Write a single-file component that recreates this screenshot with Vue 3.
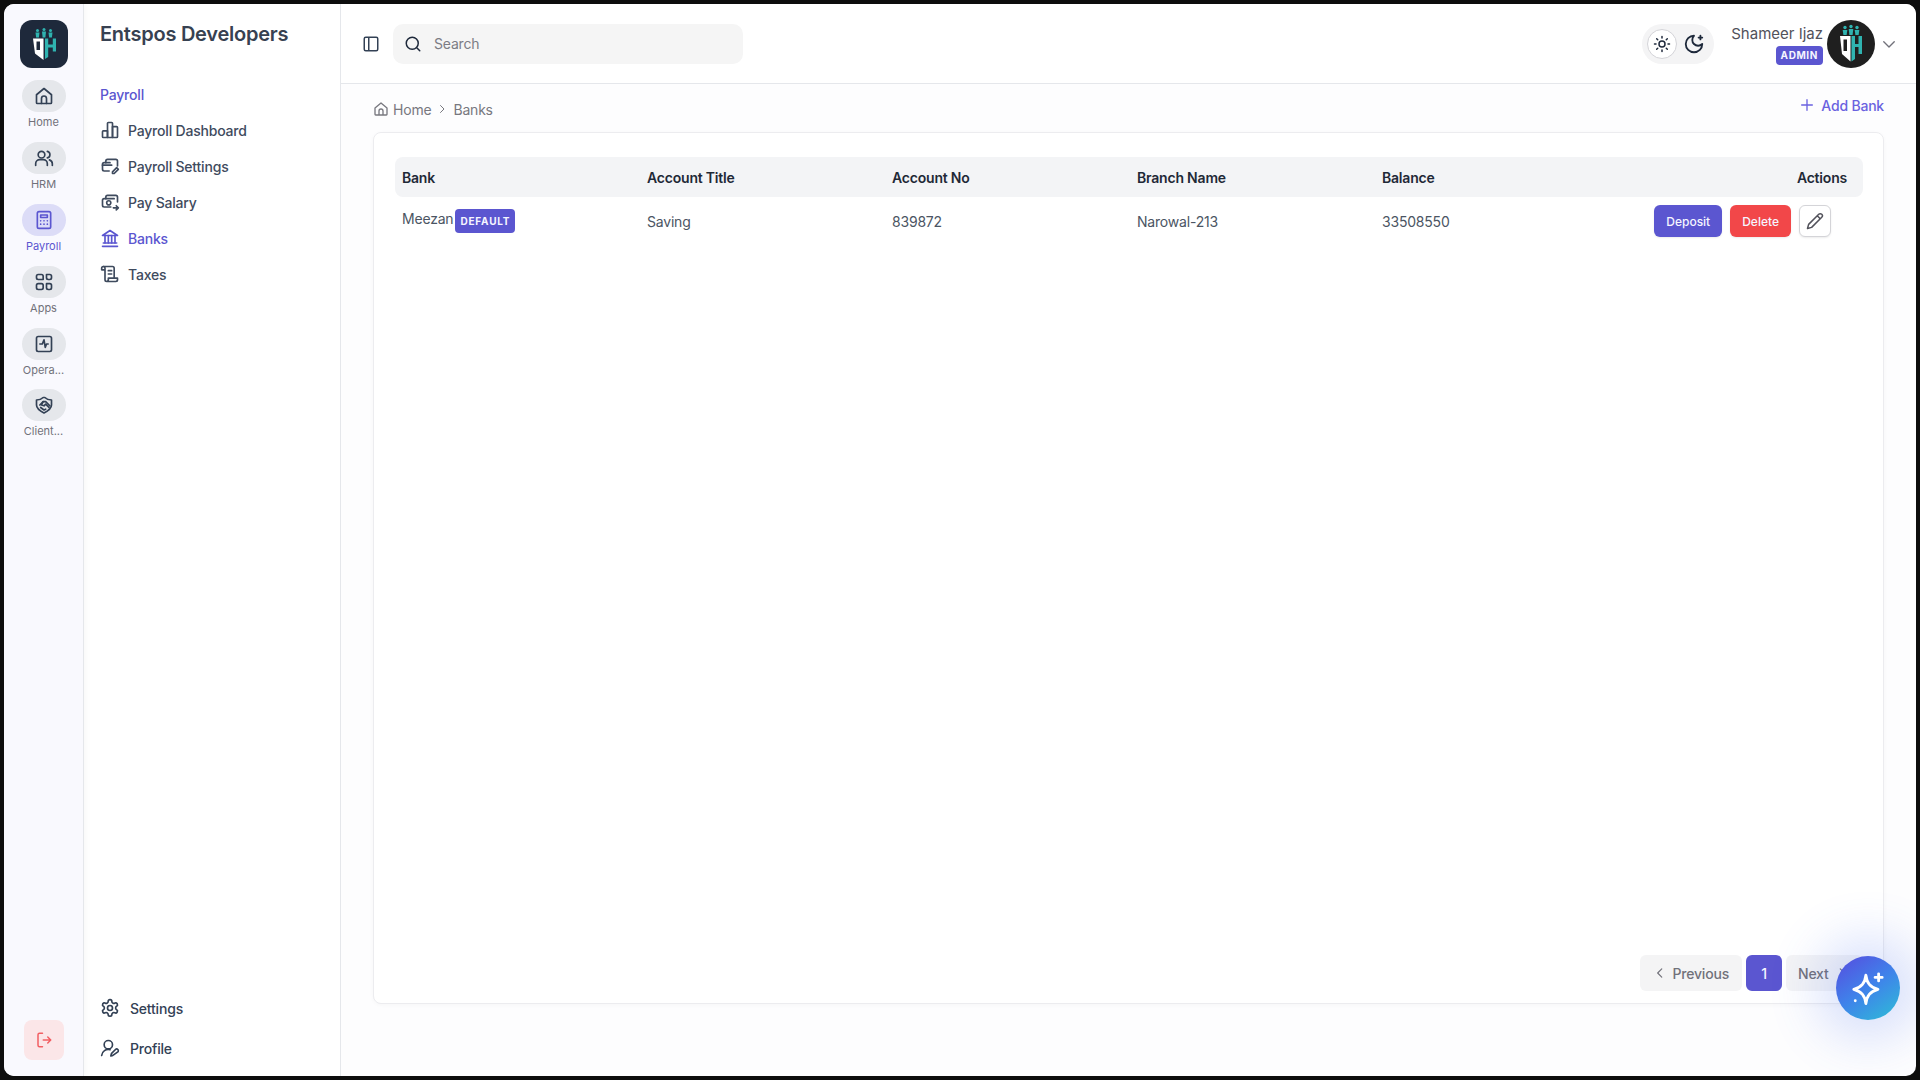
<template>
  <div class="app">
    <div class="frame">
      <!-- icon rail -->
      <aside class="rail">
        <div class="logo">
          <svg viewBox="0 0 48 48" width="48" height="48">
            <g fill="#2fb3b0">
              <circle cx="17.5" cy="10.5" r="1.5" /><path d="M15.5 12.5h4l-.6 5h-2.8z" />
              <circle cx="24" cy="9.5" r="1.5" /><path d="M22 11.5h4l-.6 6h-2.8z" />
              <circle cx="30.5" cy="10.5" r="1.5" /><path d="M28.5 12.5h4l-.6 5h-2.8z" />
              <path d="M25 18.500h3.200v6h4.600v-6H36v13h-3.200v-4h-4.600v9.500L25 39z" />
            </g>
            <path fill="#fff" fill-rule="evenodd" d="M13 18.500h10.500V40L15 33.500zM16.500 21.500v8.500h3.500v-8.500z" />
          </svg>
        </div>
        <a v-for="item in railItems" :key="item.label" class="rail-item" :class="{ active: item.active }">
          <span class="rail-pill">
            <svg class="icon" viewBox="0 0 24 24" width="20" height="20"><path v-for="d in item.icon" :key="d" :d="d" /></svg>
          </span>
          <span class="rail-label">{{ item.label }}</span>
        </a>
        <button class="logout">
          <svg class="icon" viewBox="0 0 24 24" width="18" height="18"><path d="M10 3H6a2 2 0 0 0-2 2v14a2 2 0 0 0 2 2h4M11 12h10M17 8l4 4-4 4" /></svg>
        </button>
      </aside>

      <!-- section sidebar -->
      <nav class="sidebar">
        <h1 class="company">Entspos Developers</h1>
        <p class="section">Payroll</p>
        <a v-for="link in sideLinks" :key="link.label" class="side-link" :class="{ active: link.active }">
          <svg class="icon" viewBox="0 0 24 24" width="20" height="20"><path v-for="d in link.icon" :key="d" :d="d" /></svg>
          <span>{{ link.label }}</span>
        </a>
        <div class="side-bottom">
          <a v-for="link in bottomLinks" :key="link.label" class="bottom-link">
            <svg class="icon" viewBox="0 0 24 24" width="20" height="20"><path v-for="d in link.icon" :key="d" :d="d" /></svg>
            <span>{{ link.label }}</span>
          </a>
        </div>
      </nav>

      <div class="main">
        <header class="topbar">
          <svg class="icon panel-icon" viewBox="0 0 24 24" width="18" height="18"><path d="M5 3h14a2 2 0 0 1 2 2v14a2 2 0 0 1-2 2H5a2 2 0 0 1-2-2V5a2 2 0 0 1 2-2zM9 3v18" /></svg>
          <div class="search">
            <svg class="icon" viewBox="0 0 24 24" width="18" height="18"><path d="M11 3a8 8 0 1 0 0 16 8 8 0 0 0 0-16zM21 21l-4.300-4.300" /></svg>
            <span>Search</span>
          </div>
          <div class="theme">
            <span class="sun">
              <svg class="icon" viewBox="0 0 24 24" width="18" height="18"><path d="M12 8a4 4 0 1 0 0 8 4 4 0 0 0 0-8zM12 2v2M12 20v2M4.900 4.900l1.400 1.400M17.700 17.700l1.400 1.400M2 12h2M20 12h2M6.300 17.700l-1.400 1.400M19.100 4.900l-1.400 1.400" /></svg>
            </span>
            <svg class="icon moon" viewBox="0 0 24 24" width="22" height="22"><path d="M12 3a6 6 0 0 0 9 9 9 9 0 1 1-9-9zM19 3v4M17 5h4" /></svg>
          </div>
          <div class="user">
            <div class="user-text">
              <span class="user-name">Shameer Ijaz</span>
              <span class="badge">ADMIN</span>
            </div>
            <svg class="avatar" viewBox="0 0 48 48" width="48" height="48">
              <circle cx="24" cy="24" r="24" fill="#1f1f1f" />
              <g fill="#2fb3b0">
                <circle cx="18" cy="7.500" r="1.700" /><path d="M15.700 10h4.600l-.7 5h-3.200z" />
                <circle cx="24" cy="6.500" r="1.700" /><path d="M21.700 9h4.600l-.7 6h-3.200z" />
                <circle cx="30" cy="7.500" r="1.700" /><path d="M27.700 10h4.600l-.7 5h-3.200z" />
                <path d="M24.500 16h3.500v8h3.500v-8H35v18h-3.500v-7H28v12l-3.500 2.500z" />
              </g>
              <path fill="#fff" fill-rule="evenodd" d="M13 16h10.500v25.500L15 34zM16.500 19.500v11.500h3.500V19.500z" />
            </svg>
            <svg class="chevron" viewBox="0 0 24 24" width="18" height="18"><path d="M5 9l7 7 7-7" /></svg>
          </div>
        </header>

        <main class="content">
          <div class="crumb-row">
            <div class="crumbs">
              <svg class="icon home-icon" viewBox="0 0 24 24" width="16" height="16"><path d="M3 10.500 12 3l9 7.500V20a1 1 0 0 1-1 1H4a1 1 0 0 1-1-1zM9 21v-6a3 3 0 0 1 6 0v6" /></svg>
              <span>Home</span>
              <svg class="icon" viewBox="0 0 24 24" width="12" height="12"><path d="M9 5l7 7-7 7" /></svg>
              <span>Banks</span>
            </div>
            <a class="add-bank">
              <svg class="icon" viewBox="0 0 24 24" width="16" height="16"><path d="M12 4v16M4 12h16" /></svg>
              Add Bank
            </a>
          </div>

          <section class="card">
            <table class="table">
              <thead>
                <tr>
                  <th v-for="col in columns" :key="col">{{ col }}</th>
                  <th class="right">Actions</th>
                </tr>
              </thead>
              <tbody>
                <tr v-for="bank in banks" :key="bank.account">
                  <td><span class="bank-name">{{ bank.name }}</span><span class="badge default">DEFAULT</span></td>
                  <td>{{ bank.title }}</td>
                  <td>{{ bank.account }}</td>
                  <td>{{ bank.branch }}</td>
                  <td>{{ bank.balance }}</td>
                  <td class="actions">
                    <button class="btn deposit">Deposit</button>
                    <button class="btn delete">Delete</button>
                    <button class="btn edit">
                      <svg class="icon" viewBox="0 0 24 24" width="18" height="18"><path d="M17 3a2.800 2.800 0 0 1 4 4L7.500 20.500 2 22l1.500-5.500zM15 5l4 4" /></svg>
                    </button>
                  </td>
                </tr>
              </tbody>
            </table>

            <div class="pager">
              <button class="page-btn">
                <svg class="icon" viewBox="0 0 24 24" width="14" height="14"><path d="M15 5l-7 7 7 7" /></svg>
                Previous
              </button>
              <button class="page-btn current">1</button>
              <button class="page-btn next">
                Next
                <svg class="icon" viewBox="0 0 24 24" width="14" height="14"><path d="M9 5l7 7-7 7" /></svg>
              </button>
            </div>
          </section>
        </main>
      </div>

      <button class="fab">
        <svg class="icon" viewBox="0 0 24 24" width="34" height="34"><path d="M10.500 3c.7 5.600 2.900 8.300 8.500 10-5.600 1.700-7.800 4.400-8.500 10-.7-5.600-2.900-8.300-8.500-10 5.600-1.700 7.800-4.400 8.500-10zM19.500 2v5M17 4.500h5M3 21h.01" /></svg>
      </button>
    </div>
  </div>
</template>

<script setup>
const home = ['M3 10.500 12 3l9 7.500V20a1 1 0 0 1-1 1H4a1 1 0 0 1-1-1z', 'M9 21v-6a3 3 0 0 1 6 0v6']

const railItems = [
  { label: 'Home', icon: home },
  {
    label: 'HRM',
    icon: ['M9 4a4 4 0 1 0 0 8 4 4 0 0 0 0-8z', 'M2 21v-2a5 5 0 0 1 5-5h4a5 5 0 0 1 5 5v2', 'M16 4.100a4 4 0 0 1 0 7.800', 'M22 21v-2a5 5 0 0 0-3.500-4.700'],
  },
  {
    label: 'Payroll',
    active: true,
    icon: ['M6 2h12a2 2 0 0 1 2 2v16a2 2 0 0 1-2 2H6a2 2 0 0 1-2-2V4a2 2 0 0 1 2-2z', 'M8 6h8v3H8z', 'M8 13h.01M12 13h.01M16 13h.01M8 17h.01M12 17h.01M16 17h.01'],
  },
  {
    label: 'Apps',
    icon: ['M5 3h4a2 2 0 0 1 2 2v4H5a2 2 0 0 1-2-2V5a2 2 0 0 1 2-2z', 'M15 3h4a2 2 0 0 1 2 2v2a2 2 0 0 1-2 2h-2a2 2 0 0 1-2-2V3z', 'M5 14h4a2 2 0 0 1 2 2v3a2 2 0 0 1-2 2H5a2 2 0 0 1-2-2v-3a2 2 0 0 1 2-2z', 'M15 14h4a2 2 0 0 1 2 2v3a2 2 0 0 1-2 2h-2a2 2 0 0 1-2-2v-5z'],
  },
  {
    label: 'Opera...',
    icon: ['M5 3h14a2 2 0 0 1 2 2v14a2 2 0 0 1-2 2H5a2 2 0 0 1-2-2V5a2 2 0 0 1 2-2z', 'M7 12h3l2-5 1.500 9 1.500-4h2'],
  },
  {
    label: 'Client...',
    icon: ['M3 6c3.500 0 6-1 8-3h2c2 2 4.500 3 8 3v6c0 4-4 7-9 9.500-5-2.500-9-5.500-9-9.500z', 'M7 12l4-4h3l5 5', 'M11 8l-2 4 3 1 2-2 4 4', 'M8 15l4 3 2-1'],
  },
]

const sideLinks = [
  { label: 'Payroll Dashboard', icon: ['M3 14a1 1 0 0 1 1-1h5v8H4a1 1 0 0 1-1-1z', 'M9 4a1 1 0 0 1 1-1h4a1 1 0 0 1 1 1v17H9z', 'M15 8h5a1 1 0 0 1 1 1v11a1 1 0 0 1-1 1h-5z'] },
  { label: 'Payroll Settings', icon: ['M7 8V6a2 2 0 0 1 2-2h10a2 2 0 0 1 2 2v6', 'M12 8H5a2 2 0 0 0-2 2v6a2 2 0 0 0 2 2h6', 'M3 11h11', 'M20 14l2 2-5 5h-2v-2z'] },
  { label: 'Pay Salary', icon: ['M7 8V6a2 2 0 0 1 2-2h10a2 2 0 0 1 2 2v6', 'M17 8H5a2 2 0 0 0-2 2v6a2 2 0 0 0 2 2h8', 'M10.500 10.500a2.500 2.500 0 1 0 0 5 2.500 2.500 0 0 0 0-5z', 'M16 19h6M19.500 16.500 22 19l-2.500 2.500'] },
  { label: 'Banks', active: true, icon: ['M3 22h18', 'M4 18h16', 'M3 9 12 3l9 6z', 'M6 9v9M10 9v9M14 9v9M18 9v9'] },
  { label: 'Taxes', icon: ['M8 21h11a2 2 0 0 0 2-2v-2H10v2a2 2 0 0 1-4 0V5a2 2 0 1 0-4 0v2h4', 'M4 3h11a2 2 0 0 1 2 2v12', 'M10 8h4M10 12h4'] },
]

const bottomLinks = [
  {
    label: 'Settings',
    icon: ['M12.200 2h-.4a2 2 0 0 0-2 2v.2a2 2 0 0 1-1 1.700l-.4.300a2 2 0 0 1-2 0l-.2-.1a2 2 0 0 0-2.700.7l-.2.400a2 2 0 0 0 .7 2.700l.2.100a2 2 0 0 1 1 1.700v.5a2 2 0 0 1-1 1.700l-.2.100a2 2 0 0 0-.7 2.700l.2.400a2 2 0 0 0 2.700.7l.2-.1a2 2 0 0 1 2 0l.4.300a2 2 0 0 1 1 1.700v.2a2 2 0 0 0 2 2h.4a2 2 0 0 0 2-2v-.2a2 2 0 0 1 1-1.700l.4-.3a2 2 0 0 1 2 0l.2.100a2 2 0 0 0 2.700-.7l.2-.4a2 2 0 0 0-.7-2.700l-.2-.1a2 2 0 0 1-1-1.700v-.5a2 2 0 0 1 1-1.700l.2-.1a2 2 0 0 0 .7-2.700l-.2-.4a2 2 0 0 0-2.700-.7l-.2.100a2 2 0 0 1-2 0l-.4-.3a2 2 0 0 1-1-1.700V4a2 2 0 0 0-2-2z', 'M12 9a3 3 0 1 0 0 6 3 3 0 0 0 0-6z'],
  },
  {
    label: 'Profile',
    icon: ['M10 3a5 5 0 1 0 0 10 5 5 0 0 0 0-10z', 'M2 21a8 8 0 0 1 10-7', 'M21.400 16.600a1.900 1.900 0 0 0-2.800-2.800l-4.400 4.400a2 2 0 0 0-.5.800L13 21.500l2.500-.7a2 2 0 0 0 .8-.5z'],
  },
]

const columns = ['Bank', 'Account Title', 'Account No', 'Branch Name', 'Balance']

const banks = [
  { name: 'Meezan', title: 'Saving', account: '839872', branch: 'Narowal-213', balance: '33508550' },
]
</script>

<style>
html,
body {
  margin: 0;
  background: #0d0d0d;
}
</style>

<style scoped>
.app {
  height: 100vh;
  padding: 4px;
  box-sizing: border-box;
  font-family: Inter, "Noto Sans", sans-serif;
  letter-spacing: -0.2px;
  color: #4b5563;
}

.frame {
  position: relative;
  height: 100%;
  display: flex;
  background: #fdfdfe;
  border-radius: 10px;
  overflow: hidden;
}

.icon {
  fill: none;
  stroke: currentColor;
  stroke-width: 2;
  stroke-linecap: round;
  stroke-linejoin: round;
  flex-shrink: 0;
}

/* rail */
.rail {
  width: 80px;
  flex-shrink: 0;
  box-sizing: border-box;
  padding-top: 16px;
  display: flex;
  flex-direction: column;
  align-items: center;
  background: #f9f9fe;
  border-right: 1px solid #e5e7eb;
  box-shadow: 2px 0 6px rgba(0, 0, 0, 0.03);
  z-index: 1;
}

.logo {
  width: 48px;
  height: 48px;
  border-radius: 12px;
  background: #1e293b;
  margin-bottom: 12px;
}

.logo svg,
.avatar {
  display: block;
}

.rail-item {
  width: 44px;
  height: 61.9px;
  display: flex;
  flex-direction: column;
  align-items: center;
  color: #334155;
}

.rail-pill {
  width: 44px;
  height: 32px;
  border-radius: 16px;
  background: #e5e7eb;
  display: flex;
  align-items: center;
  justify-content: center;
}

.rail-label {
  margin-top: 3px;
  font-size: 11px;
  line-height: 14px;
  letter-spacing: 0;
  color: #71717a;
  white-space: nowrap;
}

.rail-item.active .rail-pill {
  background: #dcdcf7;
  color: #5b56d0;
}

.rail-item.active .rail-label {
  color: #5b56d0;
}

.logout {
  margin-top: auto;
  margin-bottom: 16px;
  width: 40px;
  height: 40px;
  border: none;
  border-radius: 8px;
  background: #fbe6e8;
  color: #f25f63;
  display: flex;
  align-items: center;
  justify-content: center;
}

/* sidebar */
.sidebar {
  width: 257px;
  flex-shrink: 0;
  box-sizing: border-box;
  padding: 0 16px;
  display: flex;
  flex-direction: column;
  background: #fff;
  border-right: 1px solid #e5e7eb;
}

.company {
  margin: 18px 0 0;
  font-size: 20px;
  line-height: 24px;
  font-weight: 600;
  color: #374151;
  letter-spacing: -0.25px;
}

.section {
  margin: 39px 0 7px;
  font-size: 14px;
  line-height: 20px;
  font-weight: 500;
  color: #5b56d0;
}

.side-link {
  height: 36px;
  display: flex;
  align-items: center;
  gap: 8px;
  font-size: 14px;
  font-weight: 500;
  color: #3f4b5e;
}

.side-link.active {
  color: #5b56d0;
}

.side-bottom {
  margin-top: auto;
  padding-bottom: 8px;
}

.bottom-link {
  height: 40px;
  display: flex;
  align-items: center;
  gap: 10px;
  font-size: 14px;
  font-weight: 500;
  color: #334155;
}

/* main */
.main {
  flex: 1;
  min-width: 0;
  display: flex;
  flex-direction: column;
}

.topbar {
  height: 80px;
  flex-shrink: 0;
  box-sizing: border-box;
  padding: 0 18px 0 21px;
  display: flex;
  align-items: center;
  background: #fff;
  border-bottom: 1px solid #e5e7eb;
  color: #334155;
}

.panel-icon {
  margin-right: 13px;
}

.search {
  width: 350px;
  height: 40px;
  box-sizing: border-box;
  padding: 0 11px;
  border-radius: 10px;
  background: #f5f5f5;
  display: flex;
  align-items: center;
  gap: 12px;
  font-size: 14px;
  color: #7c7c84;
}

.search .icon {
  color: #1e293b;
}

.theme {
  margin-left: auto;
  width: 72px;
  height: 40px;
  box-sizing: border-box;
  padding-left: 5px;
  border-radius: 20px;
  background: #f4f4f5;
  display: flex;
  align-items: center;
  gap: 6px;
  color: #1e293b;
}

.sun {
  width: 30px;
  height: 30px;
  border-radius: 50%;
  background: #fff;
  border: 1px solid #d4d4d8;
  box-sizing: border-box;
  display: flex;
  align-items: center;
  justify-content: center;
}

.user {
  margin-left: 17px;
  display: flex;
  align-items: center;
}

.user-text {
  display: flex;
  flex-direction: column;
  align-items: flex-end;
  gap: 2px;
  margin-top: 2px;
}

.user-name {
  font-size: 15px;
  line-height: 20px;
  letter-spacing: 0;
  color: #52525b;
  white-space: nowrap;
}

.badge {
  display: inline-block;
  border-radius: 4px;
  background: #5b56d0;
  color: #f5f5ff;
  font-size: 10px;
  line-height: 19px;
  font-weight: 700;
  letter-spacing: 0.6px;
  padding: 0 5px;
}

.avatar {
  margin-left: 4px;
}

.chevron {
  margin-left: 5px;
  fill: none;
  stroke: #71717a;
  stroke-width: 1.800;
  stroke-linecap: round;
  stroke-linejoin: round;
}

/* content */
.content {
  flex: 1;
  min-height: 0;
  box-sizing: border-box;
  padding: 11px 32px 72px 32px;
  display: flex;
  flex-direction: column;
}

.crumb-row {
  height: 37px;
  flex-shrink: 0;
  display: flex;
  justify-content: space-between;
}

.crumbs {
  height: 28px;
  display: flex;
  align-items: center;
  gap: 5px;
  font-size: 14px;
  color: #78787f;
}

.home-icon {
  margin-right: -1px;
}

.add-bank {
  height: 20px;
  display: flex;
  align-items: center;
  gap: 6px;
  font-size: 14px;
  font-weight: 500;
  color: #6a62e0;
  white-space: nowrap;
}

.card {
  flex: 1;
  min-height: 0;
  box-sizing: border-box;
  padding: 24px 20px 12px 21px;
  background: #fff;
  border: 1px solid #ececef;
  border-radius: 8px;
  display: flex;
  flex-direction: column;
  box-shadow: 0 1px 4px rgba(0, 0, 0, 0.03);
}

.table {
  width: 100%;
  table-layout: fixed;
  border-collapse: collapse;
}

.table th {
  width: 245px;
  height: 40px;
  padding: 0 7px;
  box-sizing: border-box;
  background: #f3f4f6;
  text-align: left;
  font-size: 14px;
  font-weight: 600;
  color: #1f2937;
}

.table th:first-child {
  border-radius: 8px 0 0 8px;
}

.table th:last-child {
  width: auto;
  padding-right: 16px;
  border-radius: 0 8px 8px 0;
}

.table th.right {
  text-align: right;
}

.table td {
  height: 48px;
  padding: 0 7px;
  font-size: 14px;
  color: #4b5563;
}

.bank-name {
  position: relative;
  top: -1px;
}

.default {
  margin-left: 2px;
  line-height: 24px;
  letter-spacing: 0.8px;
}

.table td.actions {
  padding-right: 32px;
  text-align: right;
  white-space: nowrap;
  font-size: 0;
}

.btn {
  height: 32px;
  padding: 0 12px;
  margin-left: 8px;
  border: none;
  border-radius: 6px;
  font: 500 12px Inter, sans-serif;
  color: #f5f5ff;
  vertical-align: middle;
  box-shadow: 0 1px 2px rgba(0, 0, 0, 0.08);
}

.deposit {
  background: #5b56d0;
}

.delete {
  background: #f24749;
}

.edit {
  width: 32px;
  padding: 0;
  background: #fff;
  border: 1px solid #d4d4d8;
  color: #52525b;
  display: inline-flex;
  align-items: center;
  justify-content: center;
}

.pager {
  margin-top: auto;
  display: flex;
  justify-content: flex-end;
  gap: 4px;
}

.page-btn {
  height: 36px;
  padding: 0 12px;
  border: none;
  border-radius: 6px;
  background: #f4f4f5;
  color: #71717a;
  display: flex;
  align-items: center;
  gap: 6px;
  font: 500 14px Inter, sans-serif;
  letter-spacing: -0.2px;
}

.page-btn:first-child {
  padding: 0 13px 0 13px;
}

.page-btn.current {
  width: 36px;
  padding: 0;
  justify-content: center;
  background: #5b56d0;
  color: #f5f5ff;
}

.page-btn.next {
  width: 77px;
  box-sizing: border-box;
}

.fab {
  position: absolute;
  right: 16px;
  bottom: 56px;
  width: 64px;
  height: 64px;
  border: none;
  border-radius: 50%;
  color: #fff;
  background: linear-gradient(145deg, #5550e0 5%, #3f83ea 50%, #2fb8d8 95%);
  box-shadow: 0 0 50px 20px rgba(70, 110, 240, 0.2);
  display: flex;
  align-items: center;
  justify-content: center;
  z-index: 2;
}
</style>
